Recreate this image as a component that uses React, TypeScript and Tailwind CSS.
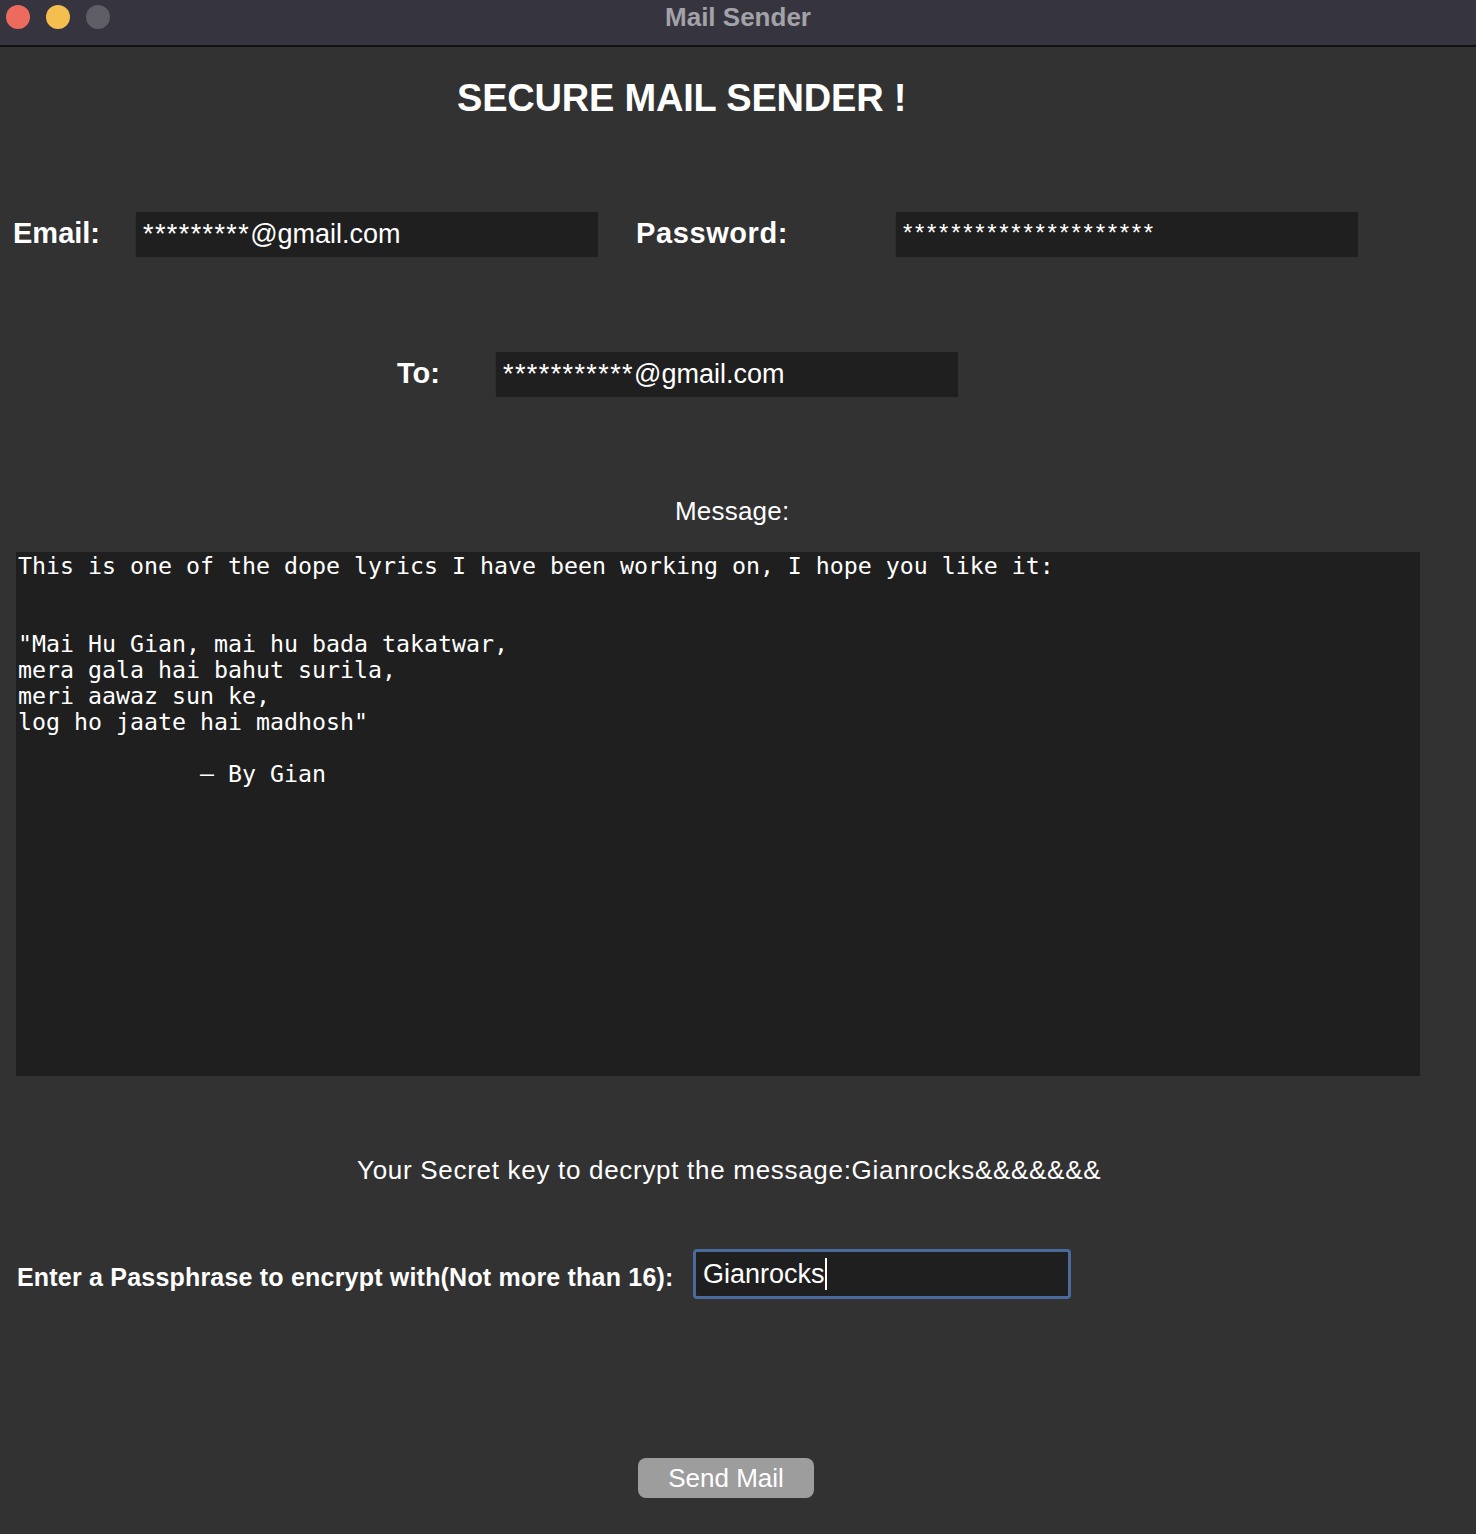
import React from "react"

const sans = { fontFamily: '"Liberation Sans", Arial, sans-serif' }

const lyrics = `This is one of the dope lyrics I have been working on, I hope you like it:


"Mai Hu Gian, mai hu bada takatwar,
mera gala hai bahut surila,
meri aawaz sun ke,
log ho jaate hai madhosh"

             – By Gian`

function Field({ stars, rest, small }: { stars: string; rest?: string; small?: boolean }) {
  return (
    <div className="w-[462px] h-[44px] bg-[#1f1f1f] shadow-[0_1px_1px_rgba(0,0,0,0.35)] flex items-center px-[7px]">
      {small ? (
        <span className="text-[24px] tracking-[2.7px] -mt-[2px]">{stars}</span>
      ) : (
        <span className="text-[27px]">
          <span className="tracking-[1.4px]">{stars}</span>
          {rest}
        </span>
      )}
    </div>
  )
}

export default function App() {
  return (
    <div className="w-[1476px] h-[1534px] bg-[#323232] text-white overflow-hidden" style={sans}>
      {/* title bar */}
      <div className="relative h-[47px] bg-[#36353f] border-b-2 border-[#121214] flex items-center justify-center">
        <div className="absolute left-[6px] top-[5px] flex gap-[16px]">
          <span className="w-[24px] h-[24px] rounded-full bg-[#ed6a5e]" />
          <span className="w-[24px] h-[24px] rounded-full bg-[#f4bf4f]" />
          <span className="w-[24px] h-[24px] rounded-full bg-[#5f5e66]" />
        </div>
        <span className="text-[26px] font-bold text-[#a3a2a8] -mt-[10px]">Mail Sender</span>
      </div>

      {/* heading */}
      <div className="h-[165px] pt-[26px] pl-[457px]">
        <h1 className="text-[38px] font-bold leading-[50px] tracking-[-0.2px]">SECURE MAIL SENDER !</h1>
      </div>

      {/* email / password */}
      <div className="flex items-center h-[44px]">
        <span className="w-[136px] pl-[13px] text-[29px] font-bold">Email:</span>
        <Field stars="*********" rest="@gmail.com" />
        <span className="w-[298px] pl-[38px] text-[29px] font-bold tracking-[0.6px]">Password:</span>
        <Field stars="*********************" small />
      </div>

      {/* to */}
      <div className="flex items-center h-[44px] mt-[96px]">
        <span className="w-[496px] pl-[397px] text-[29px] font-bold">To:</span>
        <Field stars="***********" rest="@gmail.com" />
      </div>

      {/* message */}
      <div className="h-[156px] flex items-end pb-[21px] pl-[675px]">
        <span className="text-[26px] tracking-[0.2px]">Message:</span>
      </div>
      <div className="ml-[16px] w-[1404px] h-[524px] bg-[#1f1f1f] px-[2px] pt-[1px]">
        <pre
          className="text-[23.25px] leading-[26px] whitespace-pre"
          style={{ fontFamily: '"DejaVu Sans Mono", monospace' }}
        >
          {lyrics}
        </pre>
      </div>

      {/* secret key */}
      <div className="h-[173px] flex items-center pl-[357px] pt-[16px]">
        <span className="text-[26px] tracking-[0.7px]">
          Your Secret key to decrypt the message:Gianrocks&amp;&amp;&amp;&amp;&amp;&amp;&amp;
        </span>
      </div>

      {/* passphrase */}
      <div className="flex items-center h-[50px]">
        <span className="w-[693px] pl-[17px] text-[25px] font-bold pt-[8px] tracking-[0.2px]">
          Enter a Passphrase to encrypt with(Not more than 16):
        </span>
        <div className="w-[378px] h-[50px] rounded-[4px] border-[3px] border-[#4a6a9c] bg-[#1f1f1f] flex items-center px-[7px]">
          <span className="text-[27px]">Gianrocks</span>
          <span className="w-[2px] h-[32px] bg-white" />
        </div>
      </div>

      {/* send */}
      <div className="mt-[159px] pl-[638px]">
        <button className="w-[176px] h-[40px] rounded-[8px] bg-[#9d9d9d] text-white text-[26px] leading-[40px]">
          Send Mail
        </button>
      </div>
    </div>
  )
}
